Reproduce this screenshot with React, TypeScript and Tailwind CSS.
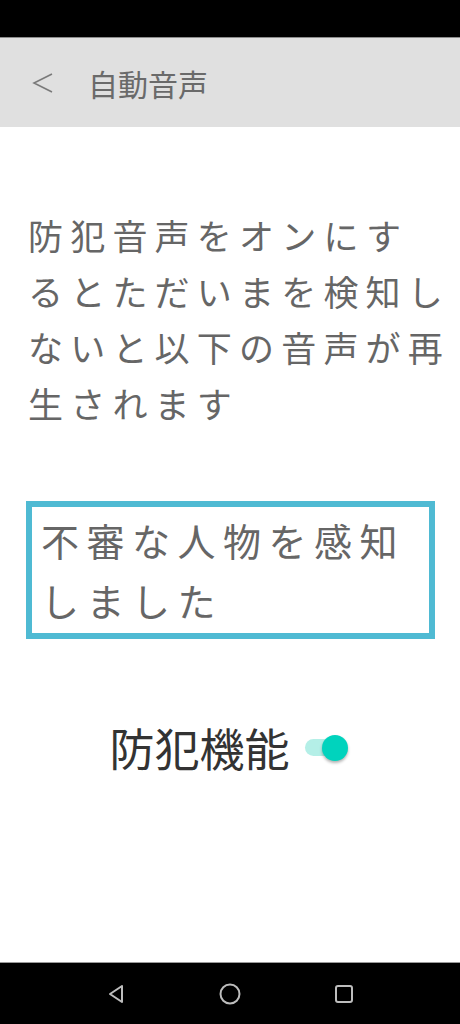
import React, { useState } from "react";

const jp = "font-['Noto_Sans_CJK_JP','Noto_Sans',sans-serif]";

function NavBar() {
  return (
    <div className="flex h-[62px] items-center justify-center gap-[91px] border-t border-[#9a9a9a] bg-black">
      <svg width="22" height="22" viewBox="0 0 22 22" fill="none" stroke="#bdbdbd" strokeWidth="2" strokeLinejoin="round">
        <path d="M17 3 L5 11 L17 19 Z" />
      </svg>
      <svg width="24" height="24" viewBox="0 0 24 24" fill="none" stroke="#bdbdbd" strokeWidth="2">
        <circle cx="12" cy="12" r="9.5" />
      </svg>
      <svg width="22" height="22" viewBox="0 0 22 22" fill="none" stroke="#bdbdbd" strokeWidth="2">
        <rect x="3" y="3" width="16" height="16" rx="2" />
      </svg>
    </div>
  );
}

export default function App() {
  const [enabled, setEnabled] = useState(true);

  return (
    <div className={`flex h-[1024px] w-[460px] flex-col bg-white ${jp}`}>
      <div className="h-[38px] border-b border-[#8c8c8c] bg-black" />

      <header className="flex h-[89px] items-center bg-[#e0e0e0]">
        <button className="ml-[32px] flex h-[24px] w-[24px] items-center">
          <svg width="22" height="22" viewBox="0 0 22 22" fill="none" stroke="#7a7a7a" strokeWidth="1.6">
            <path d="M20 2 L2 11 L20 20" />
          </svg>
        </button>
        <h1 className="ml-[32px] text-[30px] leading-none text-[#6a6a6a]">自動音声</h1>
      </header>

      <main className="flex flex-1 flex-col">
        <p className="mt-[80px] pl-[28px] text-[35px] leading-[56px] tracking-[7.2px] text-[#666666]">
          防犯音声をオンにす
          <br />
          るとただいまを検知し
          <br />
          ないと以下の音声が再
          <br />
          生されます
        </p>

        <div className="mx-[26px] mt-[70px] w-[409px] border-[6px] border-[#4fbad3] px-[9px] py-[3px]">
          <p className="text-[38px] leading-[60px] tracking-[7.5px] text-[#666666]">
            不審な人物を感知
            <br />
            しました
          </p>
        </div>

        <div className="mt-[86px] flex items-center justify-center gap-[15px] pr-[2px]">
          <span className="text-[45px] leading-none text-[#333333]">防犯機能</span>
          <button
            onClick={() => setEnabled((v) => !v)}
            className="relative flex h-[26px] w-[44px] items-center"
          >
            <span
              className={`h-[17px] w-[36px] rounded-full ${enabled ? "bg-[#b4efe7]" : "bg-[#cfcfcf]"}`}
            />
            <span
              className={`absolute top-0 h-[26px] w-[26px] rounded-full shadow-[0_2px_3px_rgba(0,0,0,0.3)] ${
                enabled ? "left-[17px] bg-[#00d3bd]" : "left-[-4px] bg-[#f5f5f5]"
              }`}
            />
          </button>
        </div>
      </main>

      <NavBar />
    </div>
  );
}
